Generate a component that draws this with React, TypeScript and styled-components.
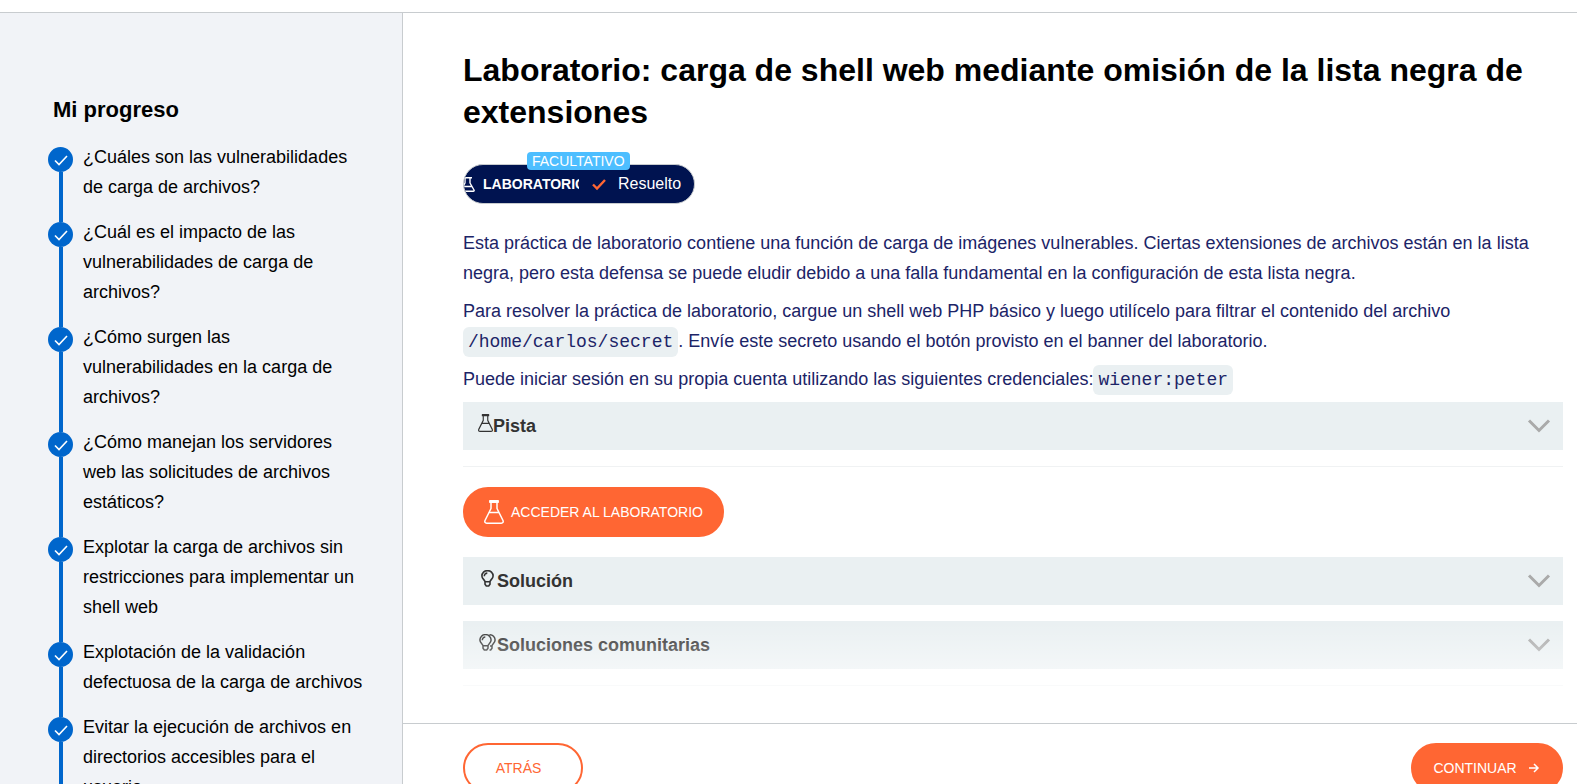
import React from "react";
import styled, { createGlobalStyle, css } from "styled-components";

const GlobalStyle = createGlobalStyle`
  *, *::before, *::after { box-sizing: border-box; }
  body {
    margin: 0;
    background: #fff;
    color: #000;
    font-family: "Liberation Sans", Arial, Helvetica, sans-serif;
    font-size: 18px;
    line-height: 30px;
  }
  button { font-family: inherit; cursor: pointer; }
  svg { flex: none; }
`;

const Shell = styled.div`
  display: flex;
  flex-direction: column;
  height: 100vh;
  overflow: hidden;
`;

const TopBar = styled.header`
  flex: none;
  height: 13px;
  border-bottom: 1px solid #c8cccf;
`;

const Columns = styled.div`
  display: flex;
  flex: 1;
  min-height: 0;
`;

const scrollPane = css`
  overflow-y: auto;
  scrollbar-width: none;
`;

const Sidebar = styled.nav`
  ${scrollPane}
  flex: none;
  width: 403px;
  padding: 82px 39px 40px 48px;
  background: #f1f3f7;
  border-right: 1px solid #c8cccf;
`;

const SidebarTitle = styled.h2`
  margin: 0 0 17px;
  padding-left: 5px;
  font-size: 22px;
  line-height: 30px;
`;

const StepList = styled.ol`
  margin: 0;
  padding: 0;
  list-style: none;
`;

const Step = styled.li`
  display: flex;
  gap: 10px;
`;

const Track = styled.div`
  display: flex;
  flex: none;
  flex-direction: column;
  align-items: center;
  width: 25px;
`;

const Rail = styled.span<{ $grow?: boolean; $hidden?: boolean }>`
  width: 4px;
  height: 5px;
  flex: ${(p) => (p.$grow ? "1 0 auto" : "none")};
  background: ${(p) => (p.$hidden ? "transparent" : "#0066cc")};
`;

const Dot = styled.span`
  display: flex;
  align-items: center;
  justify-content: center;
  flex: none;
  width: 25px;
  height: 25px;
  border-radius: 50%;
  background: #0066cc;
`;

const StepLink = styled.a`
  flex: 1;
  padding-bottom: 15px;
  color: #000;
  text-decoration: none;
`;

const Main = styled.main`
  ${scrollPane}
  flex: 1;
  min-width: 0;
`;

const Article = styled.article`
  position: relative;
  padding: 36px 14px 37px 60px;
`;

const Title = styled.h1`
  margin: 0 0 20px;
  font-size: 32px;
  line-height: 42px;
`;

const StatusRow = styled.div`
  display: flex;
  margin-bottom: 24px;
  padding-top: 11px;
`;

const StatusPill = styled.div`
  position: relative;
  display: flex;
  width: 232px;
  height: 40px;
`;

const PillBody = styled.div`
  display: flex;
  flex: 1;
  align-items: center;
  min-width: 0;
  overflow: hidden;
  border: 1px solid #c8cccf;
  border-radius: 20px;
  background: #001350;
  color: #fff;
`;

const PillLabel = styled.span`
  display: flex;
  flex: none;
  align-items: center;
  justify-content: center;
  gap: 8px;
  width: 115px;
  padding-left: 3px;
  overflow: hidden;
  font-size: 14px;
  font-weight: bold;
  white-space: nowrap;
`;

const PillStatus = styled.span`
  display: flex;
  align-items: center;
  gap: 12px;
  padding-left: 13px;
  font-size: 16px;
`;

const Tag = styled.span`
  position: absolute;
  top: -12px;
  left: 64px;
  padding: 0 5px;
  border-radius: 4px;
  background: #4dbeff;
  color: #fff;
  font-size: 14px;
  line-height: 18px;
`;

const Text = styled.p`
  margin: 0 0 8px;
  color: #1c2467;
`;

const Code = styled.code`
  padding: 5px;
  border-radius: 6px;
  background: #eaf0f2;
  font-family: "Liberation Mono", monospace;
  font-size: 18px;
  line-height: 20px;
`;

const Panel = styled.button`
  display: flex;
  align-items: center;
  width: 100%;
  height: 48px;
  margin: 0 0 16px;
  padding: 0 12px 0 15px;
  border: 0;
  background: #eaf0f2;
  color: #333;
  font-size: 18px;
  font-weight: bold;
`;

const PanelIcon = styled.span<{ $wide?: boolean }>`
  display: flex;
  justify-content: center;
  width: ${(p) => (p.$wide ? "19px" : "15px")};
  padding-bottom: 6px;
`;

const PanelName = styled.span`
  flex: 1;
  text-align: left;
`;

const Divider = styled.hr`
  margin: 0;
  border: 0;
  border-top: 1px solid #f0f2f3;
`;

const Action = styled.button<{ $outline?: boolean; $width?: string }>`
  display: flex;
  align-items: center;
  justify-content: center;
  gap: 7px;
  height: 50px;
  min-width: ${(p) => p.$width ?? "120px"};
  padding: 0 19px;
  border: 2px solid #ff6633;
  border-radius: 25px;
  background: ${(p) => (p.$outline ? "#fff" : "#ff6633")};
  color: ${(p) => (p.$outline ? "#ff6633" : "#fff")};
  font-size: 14px;
`;

const ActionLabel = styled.span<{ $space: string }>`
  padding-right: ${(p) => p.$space};
`;

const Launch = styled.div`
  display: flex;
  padding: 20px 0;
`;

const Fade = styled.div`
  position: absolute;
  right: 0;
  bottom: 0;
  left: 0;
  height: 100px;
  background: linear-gradient(rgba(255, 255, 255, 0), #fff);
  pointer-events: none;
`;

const Footer = styled.footer`
  display: flex;
  justify-content: space-between;
  padding: 19px 14px 20px 60px;
  border-top: 1px solid #c8cccf;
`;

const Flask = ({ w, h, stroke }: { w: number; h: number; stroke: number }) => (
  <svg width={w} height={h} viewBox="0 0 20 24" fill="none" stroke="currentColor" strokeWidth={stroke} strokeLinejoin="round" strokeLinecap="round" aria-hidden="true">
    <path d="M5.800.8h8.400v1.400H5.800zM7 2.500v6L1 20.500c-.6 1.600.1 2.700 1.700 2.700h14.600c1.600 0 2.300-1.100 1.700-2.700L13 8.500v-6M5.200 12.500h9.600" />
  </svg>
);

const SmallFlask = () => (
  <svg width="15" height="15" viewBox="0 0 15 15" fill="none" stroke="currentColor" strokeWidth="1.400" strokeLinejoin="round" aria-hidden="true">
    <path d="M3 .8h9M5 1v5L1 13c-.4.800 0 1.300.8 1.300h11.400c.8 0 1.200-.5.8-1.300L10 6V1M3.300 9.500h8.400" />
  </svg>
);

const Bulb = () => (
  <svg width="13" height="17" viewBox="0 0 13 17" fill="none" stroke="currentColor" strokeWidth="1.600" aria-hidden="true">
    <path d="M4 11.800C4 10 .9 9 .9 6a5.600 5.400 0 0 1 11.200 0c0 3-3.100 4-3.100 5.800zM4 12v2.200l1.300 1.800h2.400L9 14.200V12M3.300 6.300c0-1.900 1.200-3.200 3-3.200" />
  </svg>
);

const Bulbs = () => (
  <svg width="17" height="17" viewBox="0 0 17 17" fill="none" stroke="currentColor" strokeWidth="1.500" aria-hidden="true">
    <path d="M4 11.800C4 10 .9 9 .9 6a5.600 5.400 0 0 1 11.200 0c0 3-3.100 4-3.100 5.800zM4 12v2.200l1.300 1.800h2.400L9 14.200V12M3.300 6.300c0-1.900 1.200-3.200 3-3.200M10.500.8c3.300-.2 5.600 2.300 5.600 5.200 0 3-3.100 4-3.100 5.800v2.400L11.700 16h-1.200M11 12h2" />
  </svg>
);

const Tick = ({ color, stroke }: { color: string; stroke: number }) => (
  <svg width="14" height="14" viewBox="0 0 14 14" fill="none" stroke={color} strokeWidth={stroke} aria-hidden="true">
    <path d="M1 7.500l4 4L13 3" />
  </svg>
);

const Chevron = () => (
  <svg width="24" height="14" viewBox="0 0 24 14" fill="none" stroke="#aaa" strokeWidth="3" aria-hidden="true">
    <path d="M2 1.500l10 10 10-10" />
  </svg>
);

const Arrow = () => (
  <svg width="12" height="10" viewBox="0 0 12 10" fill="none" stroke="currentColor" strokeWidth="1.500" aria-hidden="true">
    <path d="M0 5h9M5 1l4 4-4 4" />
  </svg>
);

const steps = [
  "¿Cuáles son las vulnerabilidades de carga de archivos?",
  "¿Cuál es el impacto de las vulnerabilidades de carga de archivos?",
  "¿Cómo surgen las vulnerabilidades en la carga de archivos?",
  "¿Cómo manejan los servidores web las solicitudes de archivos estáticos?",
  "Explotar la carga de archivos sin restricciones para implementar un shell web",
  "Explotación de la validación defectuosa de la carga de archivos",
  "Evitar la ejecución de archivos en directorios accesibles para el usuario",
];

export default function App() {
  return (
    <Shell>
      <GlobalStyle />
      <TopBar />
      <Columns>
        <Sidebar aria-label="Mi progreso">
          <SidebarTitle>Mi progreso</SidebarTitle>
          <StepList>
            {steps.map((step, i) => (
              <Step key={step}>
                <Track>
                  <Rail $hidden={i === 0} />
                  <Dot>
                    <Tick color="#fff" stroke={1.6} />
                  </Dot>
                  <Rail $grow />
                </Track>
                <StepLink href="#">{step}</StepLink>
              </Step>
            ))}
          </StepList>
        </Sidebar>
        <Main>
          <Article>
            <Title>Laboratorio: carga de shell web mediante omisión de la lista negra de extensiones</Title>
            <StatusRow>
              <StatusPill>
                <PillBody>
                  <PillLabel>
                    <SmallFlask />
                    LABORATORIO
                  </PillLabel>
                  <PillStatus>
                    <Tick color="#ff6633" stroke={2.4} />
                    Resuelto
                  </PillStatus>
                </PillBody>
                <Tag>FACULTATIVO</Tag>
              </StatusPill>
            </StatusRow>
            <Text>
              Esta práctica de laboratorio contiene una función de carga de imágenes vulnerables. Ciertas extensiones de
              archivos están en la lista negra, pero esta defensa se puede eludir debido a una falla fundamental en la
              configuración de esta lista negra.
            </Text>
            <Text>
              Para resolver la práctica de laboratorio, cargue un shell web PHP básico y luego utilícelo para filtrar el
              contenido del archivo <Code>/home/carlos/secret</Code>. Envíe este secreto usando el botón provisto en el
              banner del laboratorio.
            </Text>
            <Text>
              Puede iniciar sesión en su propia cuenta utilizando las siguientes credenciales:<Code>wiener:peter</Code>
            </Text>
            <Panel aria-expanded="false">
              <PanelIcon>
                <Flask w={15} h={18} stroke={1.5} />
              </PanelIcon>
              <PanelName>Pista</PanelName>
              <Chevron />
            </Panel>
            <Divider />
            <Launch>
              <Action>
                <Flask w={20} h={24} stroke={1.5} />
                ACCEDER AL LABORATORIO
              </Action>
            </Launch>
            <Panel aria-expanded="false">
              <PanelIcon $wide>
                <Bulb />
              </PanelIcon>
              <PanelName>Solución</PanelName>
              <Chevron />
            </Panel>
            <Panel aria-expanded="false">
              <PanelIcon $wide>
                <Bulbs />
              </PanelIcon>
              <PanelName>Soluciones comunitarias</PanelName>
              <Chevron />
            </Panel>
            <Divider />
            <Fade />
          </Article>
          <Footer>
            <Action $outline>
              <ActionLabel $space="9px">ATRÁS</ActionLabel>
            </Action>
            <Action $width="152px">
              <ActionLabel $space="5px">CONTINUAR</ActionLabel>
              <Arrow />
            </Action>
          </Footer>
        </Main>
      </Columns>
    </Shell>
  );
}
